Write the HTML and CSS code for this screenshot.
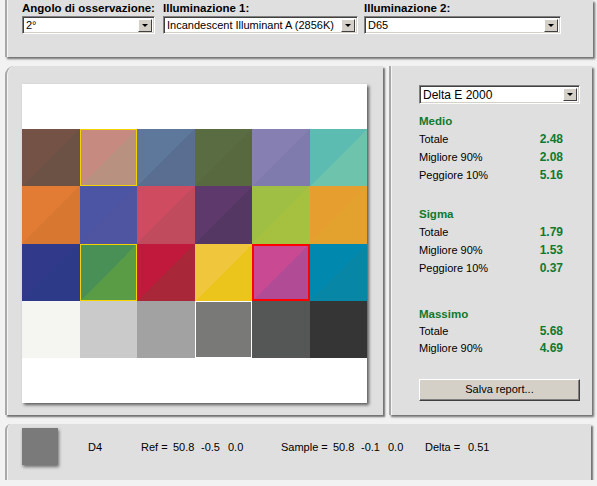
FILE: index.html
```html
<!DOCTYPE html>
<html>
<head>
    <link rel="stylesheet" href="styles.css">
</head>
<body>
<div class="app">
    <div class="panel top">
        <div class="field f1">
            <div class="label">Angolo di osservazione:</div>
            <div class="select"><span class="val">2°</span><span class="drop"></span></div>
        </div>
        <div class="field f2">
            <div class="label">Illuminazione 1:</div>
            <div class="select"><span class="val">Incandescent Illuminant A (2856K)</span><span class="drop"></span></div>
        </div>
        <div class="field f3">
            <div class="label">Illuminazione 2:</div>
            <div class="select"><span class="val">D65</span><span class="drop"></span></div>
        </div>
    </div>

    <div class="middle">
        <div class="panel chart-panel">
            <div class="chart">
                <div class="grid">
                    <div class="patch" style="background:linear-gradient(135deg,#745245 50%,#6c5244 50%)"></div>
                    <div class="patch yel" style="background:linear-gradient(135deg,#c78a80 50%,#b99180 50%)"></div>
                    <div class="patch" style="background:linear-gradient(135deg,#5e789b 50%,#5a6e92 50%)"></div>
                    <div class="patch" style="background:linear-gradient(135deg,#5a6c41 50%,#58683f 50%)"></div>
                    <div class="patch" style="background:linear-gradient(135deg,#8680b2 50%,#7f7bad 50%)"></div>
                    <div class="patch" style="background:linear-gradient(135deg,#5cbcb2 50%,#6ec3ac 50%)"></div>

                    <div class="patch" style="background:linear-gradient(135deg,#e27c35 50%,#d8772f 50%)"></div>
                    <div class="patch" style="background:linear-gradient(135deg,#4b55a4 50%,#4f55a0 50%)"></div>
                    <div class="patch" style="background:linear-gradient(135deg,#cf4b60 50%,#bf4b5d 50%)"></div>
                    <div class="patch" style="background:linear-gradient(135deg,#5d3a6b 50%,#553764 50%)"></div>
                    <div class="patch" style="background:linear-gradient(135deg,#9fbf44 50%,#a5c13f 50%)"></div>
                    <div class="patch" style="background:linear-gradient(135deg,#e69f2f 50%,#e2a22d 50%)"></div>

                    <div class="patch" style="background:linear-gradient(135deg,#30398a 50%,#2d3a88 50%)"></div>
                    <div class="patch yel" style="background:linear-gradient(135deg,#489056 50%,#599c45 50%)"></div>
                    <div class="patch" style="background:linear-gradient(135deg,#c0193b 50%,#a8283a 50%)"></div>
                    <div class="patch" style="background:linear-gradient(135deg,#f0c73c 50%,#ebc51b 50%)"></div>
                    <div class="patch red" style="background:linear-gradient(135deg,#c94a93 50%,#b24b95 50%)"></div>
                    <div class="patch" style="background:linear-gradient(135deg,#0088ae 50%,#0786a6 50%)"></div>

                    <div class="patch" style="background:#f5f5f1"></div>
                    <div class="patch" style="background:#c9cac9"></div>
                    <div class="patch" style="background:#a1a2a1"></div>
                    <div class="patch wht" style="background:#797978"></div>
                    <div class="patch" style="background:#555656"></div>
                    <div class="patch" style="background:#353535"></div>
                </div>
            </div>
        </div>

        <div class="panel stats-panel">
            <div class="select metric"><span class="val">Delta E 2000</span><span class="drop"></span></div>

            <div class="group">
                <div class="head">Medio</div>
                <div class="row"><span>Totale</span><b>2.48</b></div>
                <div class="row"><span>Migliore 90%</span><b>2.08</b></div>
                <div class="row"><span>Peggiore 10%</span><b>5.16</b></div>
            </div>

            <div class="group sigma">
                <div class="head">Sigma</div>
                <div class="row"><span>Totale</span><b>1.79</b></div>
                <div class="row"><span>Migliore 90%</span><b>1.53</b></div>
                <div class="row"><span>Peggiore 10%</span><b>0.37</b></div>
            </div>

            <div class="group max">
                <div class="head">Massimo</div>
                <div class="row"><span>Totale</span><b>5.68</b></div>
                <div class="row"><span>Migliore 90%</span><b>4.69</b></div>
            </div>

            <div class="button">Salva report...</div>
        </div>
    </div>

    <div class="panel bottom">
        <div class="swatch"></div>
        <span class="pid">D4</span>
        <span class="ref">Ref =</span><span class="n1">50.8</span><span class="n2">-0.5</span><span class="n3 ref-end">0.0</span>
        <span class="smp">Sample =</span><span class="n1">50.8</span><span class="n2">-0.1</span><span class="n3">0.0</span>
        <span class="dlt">Delta =</span><span class="dv">0.51</span>
    </div>
</div>
</body>
</html>
```

FILE: styles.css
```css
body {
    margin: 0;
    background: #f2f2f2;
    font-family: "Liberation Sans", Arial, sans-serif;
    font-size: 11px;
    color: #000;
}
.app {
    width: 588px;
    padding-left: 5px;
}
.panel {
    background: #dfdfdf;
    border-left: 2px solid #a8a8a8;
    box-shadow: 2px 2px 2px rgba(0, 0, 0, 0.55), inset 1px 0 #f4f4f4;
    box-sizing: border-box;
}

/* top bar */
.top {
    height: 57px;
    display: flex;
    gap: 6px;
    padding: 1px 0 0 15px;
}
.field {
    display: flex;
    flex-direction: column;
}
.f1 { width: 133px; margin-right: 2px; }
.f2 { width: 195px; }
.f3 { width: 197px; }
.label {
    font-size: 11.5px;
    font-weight: bold;
    line-height: 14px;
    margin-bottom: 1px;
    white-space: nowrap;
}
.select {
    height: 18px;
    background: #fff;
    border: 1px solid;
    border-color: #808080 #fff #fff #808080;
    box-shadow: inset 1px 1px #404040, inset -1px -1px #d4d0c8;
    box-sizing: border-box;
    display: flex;
    align-items: center;
    padding: 0 2px 0 3px;
}
.val {
    flex: 1;
    white-space: nowrap;
    overflow: hidden;
    line-height: 14px;
}
.drop {
    width: 14px;
    height: 13px;
    background: #d4d0c8;
    border: 1px solid;
    border-color: #fff #404040 #404040 #fff;
    box-sizing: border-box;
    position: relative;
}
.drop::after {
    content: "";
    position: absolute;
    left: 3px;
    top: 4px;
    border: 3px solid transparent;
    border-top: 3px solid #000;
    border-bottom: 0;
}

/* middle row */
.middle {
    display: flex;
    gap: 6px;
    margin-top: 9px;
    height: 349px;
}
.chart-panel {
    width: 378px;
    height: 349px;
    border-top-left-radius: 9px;
    padding: 18px 0 0 15px;
}
.chart {
    width: 345px;
    height: 319px;
    background: #fff;
    box-shadow: 2px 2px 3px rgba(0, 0, 0, 0.6);
    padding-top: 45px;
    box-sizing: border-box;
}
.grid {
    display: grid;
    grid-template-columns: repeat(6, 1fr);
    grid-template-rows: repeat(4, 57.3px);
}
.patch {
    box-sizing: border-box;
}
.patch.yel { box-shadow: inset 0 0 0 1px #f5d300; }
.patch.red { box-shadow: inset 0 0 0 2px #ff0000; }
.patch.wht { box-shadow: inset 0 0 0 1px #fff; }

.stats-panel {
    width: 203px;
    height: 349px;
    padding: 19px 0 0 28px;
}
.metric {
    width: 161px;
    height: 19px;
    font-size: 12px;
}
.group {
    width: 144px;
    margin-top: 8px;
}
.group.sigma { margin-top: 21px; }
.group.max { margin-top: 28px; }
.head {
    color: #0f7a2e;
    font-weight: bold;
    font-size: 11.5px;
    line-height: 18px;
}
.row {
    display: flex;
    justify-content: space-between;
    line-height: 18px;
}
.max .row { line-height: 17px; }
.row b {
    color: #0f7a2e;
    font-size: 12px;
}
.button {
    width: 161px;
    height: 22px;
    margin-top: 22px;
    background: #d4d0c8;
    border: 1px solid;
    border-color: #fff #404040 #404040 #fff;
    box-shadow: inset -1px -1px #808080;
    box-sizing: border-box;
    text-align: center;
    line-height: 19px;
}

/* bottom bar */
.bottom {
    margin-top: 9px;
    height: 56px;
    width: 586px;
    display: flex;
    align-items: center;
    padding-left: 15px;
    border-top-left-radius: 6px;
}
.swatch {
    width: 36px;
    height: 37px;
    background: #7a7a7a;
    box-shadow: 1px 2px 3px rgba(0, 0, 0, 0.5);
    margin-top: -11px;
    margin-right: 30px;
}
.bottom span { white-space: nowrap; margin-top: -11px; }
.pid { width: 53px; }
.ref { width: 32px; }
.smp { width: 52px; }
.n1 { width: 28px; }
.n2 { width: 27px; }
.n3 { width: 37px; }
.n3.ref-end { width: 53px; }
.dlt { width: 43px; }
```
